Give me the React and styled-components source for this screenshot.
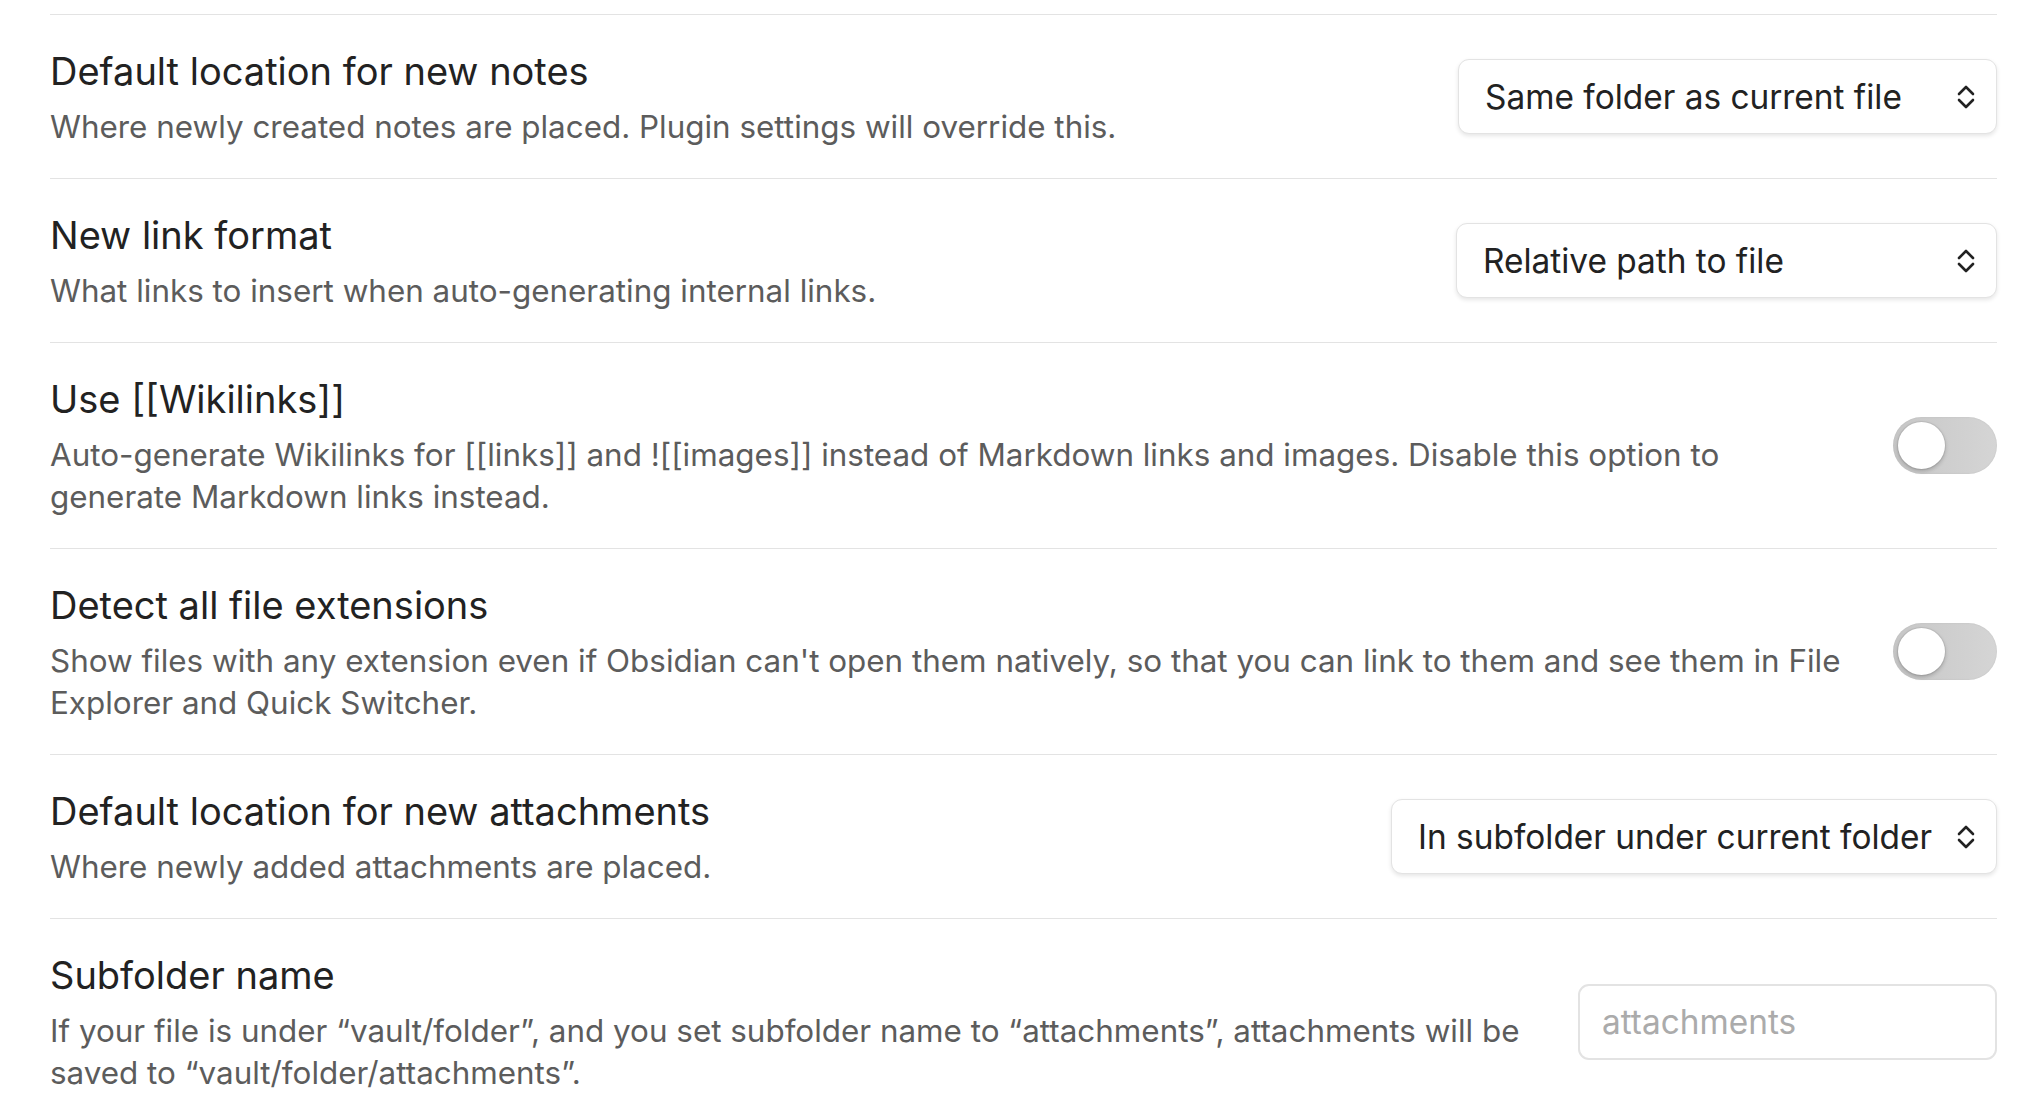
import React from 'react';
import styled, { createGlobalStyle } from 'styled-components';

const GlobalStyle = createGlobalStyle`
  html, body {
    margin: 0;
    padding: 0;
    background: #ffffff;
  }
  body {
    font-family: Inter, "Noto Sans", sans-serif;
    color: #222222;
    -webkit-font-smoothing: antialiased;
  }
`;

const settings = [
  {
    name: 'Default location for new notes',
    desc: 'Where newly created notes are placed. Plugin settings will override this.',
    type: 'dropdown',
    value: 'Same folder as current file',
    width: 539,
  },
  {
    name: 'New link format',
    desc: 'What links to insert when auto-generating internal links.',
    type: 'dropdown',
    value: 'Relative path to file',
    width: 541,
  },
  {
    name: 'Use [[Wikilinks]]',
    desc: 'Auto-generate Wikilinks for [[links]] and ![[images]] instead of Markdown links and images. Disable this option to generate Markdown links instead.',
    type: 'toggle',
  },
  {
    name: 'Detect all file extensions',
    desc: "Show files with any extension even if Obsidian can't open them natively, so that you can link to them and see them in File Explorer and Quick Switcher.",
    type: 'toggle',
  },
  {
    name: 'Default location for new attachments',
    desc: 'Where newly added attachments are placed.',
    type: 'dropdown',
    value: 'In subfolder under current folder',
    width: 606,
  },
  {
    name: 'Subfolder name',
    desc: 'If your file is under \u201Cvault/folder\u201D, and you set subfolder name to \u201Cattachments\u201D, attachments will be saved to \u201Cvault/folder/attachments\u201D.',
    type: 'text',
    placeholder: 'attachments',
  },
];

const UpDownArrow = () => (
  <svg width="18" height="26" viewBox="0 0 18 26" fill="none">
    <path
      d="M2 10L9 3L16 10M2 16L9 23L16 16"
      stroke="#222222"
      strokeWidth="2.6"
      strokeLinecap="round"
      strokeLinejoin="round"
    />
  </svg>
);

const SettingControl = ({ item }) => {
  if (item.type === 'dropdown') {
    return (
      <Dropdown $width={item.width}>
        <span>{item.value}</span>
        <UpDownArrow />
      </Dropdown>
    );
  }
  if (item.type === 'toggle') {
    return (
      <Toggle>
        <Knob />
      </Toggle>
    );
  }
  return <TextInput type="text" placeholder={item.placeholder} />;
};

const App = () => {
  return (
    <>
      <GlobalStyle />
      <Page>
        {settings.map(item => (
          <Item key={item.name}>
            <Info>
              <Name>{item.name}</Name>
              <Description>{item.desc}</Description>
            </Info>
            <Control>
              <SettingControl item={item} />
            </Control>
          </Item>
        ))}
      </Page>
    </>
  );
};
export default App;

const Page = styled.div`
  box-sizing: border-box;
  height: 1110px;
  overflow: hidden;
  padding: 14px 47px 0 50px;
`;

const Item = styled.div`
  display: flex;
  align-items: center;
  border-top: 1px solid #e3e3e3;
  padding: 30px 0 30px;
`;

const Info = styled.div`
  flex: 1;
  min-width: 0;
  margin-right: 48px;
`;

const Name = styled.div`
  font-size: 38px;
  line-height: 53px;
  color: #222222;
`;

const Description = styled.div`
  padding-top: 8px;
  font-size: 31.4px;
  line-height: 42px;
  color: #5c5c5c;
`;

const Control = styled.div`
  flex-shrink: 0;
  display: flex;
  justify-content: flex-end;
`;

const Dropdown = styled.div`
  box-sizing: border-box;
  width: ${p => p.$width}px;
  height: 75px;
  display: flex;
  align-items: center;
  justify-content: space-between;
  padding: 0 21px 0 26px;
  background: #ffffff;
  border: 1px solid #e3e3e3;
  border-radius: 11px;
  box-shadow: 0 2px 4px rgba(0, 0, 0, 0.1);
  font-size: 33.4px;
  color: #222222;
  white-space: nowrap;
`;

const Toggle = styled.div`
  box-sizing: border-box;
  width: 104px;
  height: 57px;
  display: flex;
  align-items: center;
  padding: 0 5px;
  border-radius: 29px;
  background: linear-gradient(90deg, #c7c7c7, #d5d5d5);
  box-shadow: inset 0 0 2px rgba(0, 0, 0, 0.08);
`;

const Knob = styled.div`
  width: 47px;
  height: 47px;
  border-radius: 50%;
  background: #ffffff;
  box-shadow: 0 0 0 1px rgba(0, 0, 0, 0.06), 0 2px 4px rgba(0, 0, 0, 0.22);
`;

const TextInput = styled.input`
  box-sizing: border-box;
  width: 419px;
  height: 76px;
  padding: 0 22px;
  border: 2px solid #e3e3e3;
  border-radius: 11px;
  background: #ffffff;
  font-family: Inter, "Noto Sans", sans-serif;
  font-size: 33.4px;
  color: #222222;
  outline: none;

  &::placeholder {
    color: #ababab;
  }
`;
